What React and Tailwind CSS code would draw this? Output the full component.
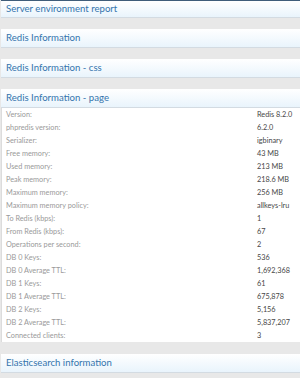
import React from "react";

const rows = [
  ["Version:", "Redis 8.2.0"],
  ["phpredis version:", "6.2.0"],
  ["Serializer:", "igbinary"],
  ["Free memory:", "43 MB"],
  ["Used memory:", "213 MB"],
  ["Peak memory:", "218.6 MB"],
  ["Maximum memory:", "256 MB"],
  ["Maximum memory policy:", "allkeys-lru"],
  ["To Redis (kbps):", "1"],
  ["From Redis (kbps):", "67"],
  ["Operations per second:", "2"],
  ["DB 0 Keys:", "536"],
  ["DB 0 Average TTL:", "1,692,368"],
  ["DB 1 Keys:", "61"],
  ["DB 1 Average TTL:", "675,878"],
  ["DB 2 Keys:", "5,156"],
  ["DB 2 Average TTL:", "5,837,207"],
  ["Connected clients:", "3"],
];

function Header({ children, first }) {
  return (
    <div
      className={
        "h-[19px] flex items-center pl-[5px] bg-gradient-to-b from-[#ffffff] to-[#e9f4fc] border-b border-[#d3dbe2] text-[9.6px] text-[#3475ad] leading-none" +
        (first ? " border-t-2 border-t-[#3f5d7a] -mt-[1px]" : "")
      }
    >
      {children}
    </div>
  );
}

export default function App() {
  return (
    <div
      className="w-[300px] h-[378px] bg-[#e8e8e8] overflow-hidden pl-[1px]"
      style={{ fontFamily: 'Lato, "Open Sans", sans-serif' }}
    >
      <div className="flex flex-col gap-[11px]">
        <Header first>Server environment report</Header>
        <Header>Redis Information</Header>
        <Header>Redis Information - css</Header>
        <div>
          <Header>Redis Information - page</Header>
          <div className="bg-white border-l border-[#dcdcdc]">
            {rows.map(([k, v]) => (
              <div key={k} className="h-[13px] flex items-center text-[7.3px] leading-none">
                <div className="pl-[4px] w-[255px] text-[#9a9a9a]">{k}</div>
                <div className="text-[#474747]">{v}</div>
              </div>
            ))}
          </div>
        </div>
        <div className="mt-[1px]">
          <Header>Elasticsearch information</Header>
        </div>
      </div>
    </div>
  );
}
